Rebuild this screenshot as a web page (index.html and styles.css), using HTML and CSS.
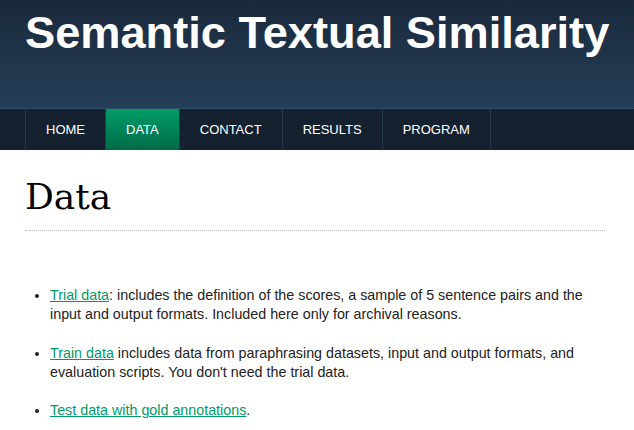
FILE: index.html
```html
<!DOCTYPE html>
<html>
<head>
<meta charset="utf-8">
<link rel="stylesheet" href="styles.css">
</head>
<body>
<header class="masthead">
  <h1 class="site-title">Semantic Textual Similarity</h1>
</header>
<nav class="navbar">
  <ul class="nav-list">
    <li class="nav-item"><a href="#">HOME</a></li>
    <li class="nav-item active"><a href="#">DATA</a></li>
    <li class="nav-item"><a href="#">CONTACT</a></li>
    <li class="nav-item"><a href="#">RESULTS</a></li>
    <li class="nav-item"><a href="#">PROGRAM</a></li>
  </ul>
</nav>
<main class="content">
  <h2 class="page-title">Data</h2>
  <ul class="data-list">
    <li><a href="#">Trial data</a>: includes the definition of the scores, a sample of 5 sentence pairs and the input and output formats. Included here only for archival reasons.</li>
    <li><a href="#">Train data</a> includes data from paraphrasing datasets, input and output formats, and evaluation scripts. You don't need the trial data.</li>
    <li><a href="#">Test data with gold annotations</a>.</li>
  </ul>
</main>
</body>
</html>
```

FILE: styles.css
```css
html, body {
  margin: 0;
  padding: 0;
  background: #ffffff;
}
body {
  font-family: "Liberation Sans", Arial, sans-serif;
  color: #222222;
}
.masthead {
  height: 109px;
  background: linear-gradient(to bottom, #1a293b, #243f58);
  border-bottom: 1px solid #2f4d6a;
  padding: 0 0 0 25px;
  box-sizing: border-box;
  overflow: hidden;
}
.site-title {
  margin: 0;
  padding-top: 7px;
  font-size: 45.2px;
  line-height: 52px;
  font-weight: bold;
  color: #ffffff;
  white-space: nowrap;
}
.navbar {
  background: #15212e;
  height: 41px;
  padding-left: 25px;
}
.nav-list {
  list-style: none;
  margin: 0;
  padding: 0;
  display: flex;
  height: 100%;
}
.nav-item {
  border-left: 1px solid #24384d;
}
.nav-item:last-child {
  border-right: 1px solid #24384d;
}
.nav-item a {
  display: block;
  height: 41px;
  line-height: 41px;
  padding: 0 20px;
  color: #ffffff;
  font-size: 13px;
  text-decoration: none;
}
.nav-item.active {
  border-left-color: #0d4a3a;
}
.nav-item.active a {
  background: linear-gradient(to bottom, #009c68, #006b47);
}
.content {
  padding: 0 29px 0 25px;
}
.page-title {
  font-family: "DejaVu Serif", serif;
  font-weight: normal;
  font-size: 36px;
  line-height: 44px;
  color: #000000;
  margin: 0;
  padding: 25px 0 11px;
  border-bottom: 1px dotted #b8b8b8;
}
.data-list {
  margin: 55px 0 0;
  padding-left: 25px;
  font-size: 14.3px;
  line-height: 19.3px;
}
.data-list li {
  margin-bottom: 19px;
}
.data-list a {
  color: #009a6a;
  text-decoration: underline;
}
```
